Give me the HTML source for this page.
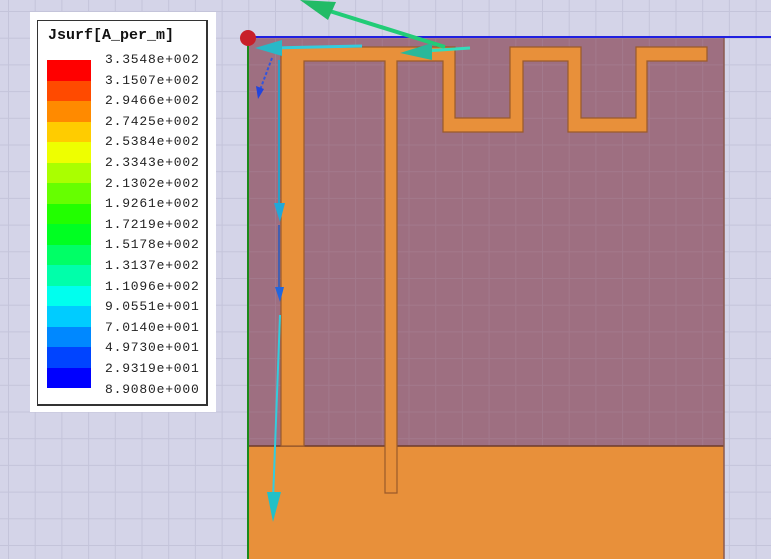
<!DOCTYPE html>
<html><head><meta charset="utf-8"><style>
html,body{margin:0;padding:0;width:771px;height:559px;overflow:hidden;background:#d4d4e8}
.leg{position:absolute;left:30px;top:12px;width:186px;height:400px;background:#fff}
.inner{position:absolute;left:7px;top:8px;width:168px;height:383px;border:1px solid #333;border-bottom-width:2px;border-right-width:2px}
.t{position:absolute;left:10px;top:6px;font:bold 15px "Liberation Mono",monospace;color:#111}
.bar{position:absolute;left:9px;width:44px}
.lab{position:absolute;left:67px;font:13px "Liberation Mono",monospace;color:#222;letter-spacing:0.8px}
</style></head><body>
<svg width="771" height="559" style="position:absolute;left:0;top:0">
<defs>
<pattern id="g" x="8" y="11" width="26.7" height="26.7" patternUnits="userSpaceOnUse">
<path d="M0 0V26.7M0 0H26.7" stroke="#c4c4da" stroke-width="2" fill="none"/>
</pattern>
</defs>
<rect width="771" height="559" fill="url(#g)"/>
<rect x="248" y="38" width="476" height="408" fill="#9e6f81"/>
<rect x="248" y="38" width="476" height="408" fill="url(#g)" opacity="0.12"/>
<rect x="248" y="446" width="476" height="113" fill="#e8903a"/>
<line x1="248" y1="446" x2="724" y2="446" stroke="#6e3a2a" stroke-width="1.5"/>
<line x1="724" y1="38" x2="724" y2="559" stroke="#8a5a50" stroke-width="1.5"/>
<path d="M281 47H455V118H510V47H581V118H636V47H707V61H647V132H568V61H523V132H443V61H397V493H385V61H304V446H281Z" fill="#e8903a" stroke="#9a5a2a" stroke-width="1.2"/>
<line x1="248" y1="37" x2="771" y2="37" stroke="#2020e0" stroke-width="2"/>
<line x1="248" y1="38" x2="248" y2="559" stroke="#1a8a1a" stroke-width="2"/>
<circle cx="248" cy="38" r="8" fill="#c8202a"/>
<line x1="445" y1="47" x2="320" y2="8" stroke="#22cc77" stroke-width="4"/>
<polygon points="300,0 336,2 328,20" fill="#22bb66"/>
<line x1="470" y1="48" x2="410" y2="52" stroke="#33ddbb" stroke-width="3"/>
<polygon points="400,53 432,43 432,60" fill="#2ab89a"/>
<line x1="362" y1="46" x2="270" y2="48" stroke="#33ccdd" stroke-width="3"/>
<polygon points="255,48 282,40 282,56" fill="#28b8c8"/>
<line x1="272" y1="58" x2="260" y2="90" stroke="#3355dd" stroke-width="2" stroke-dasharray="3,2"/>
<polygon points="258,99 256,86 264,89" fill="#2244dd"/>
<line x1="279" y1="60" x2="279" y2="210" stroke="#2aa0c8" stroke-width="2"/>
<polygon points="274,203 285,203 280,222" fill="#22a8d8"/>
<line x1="279" y1="225" x2="279" y2="290" stroke="#4460b0" stroke-width="2"/>
<polygon points="275,287 284,287 280,302" fill="#2266dd"/>
<line x1="280" y1="315" x2="273" y2="500" stroke="#33ccdd" stroke-width="2"/>
<polygon points="267,492 281,492 273,522" fill="#22c0c8"/>
</svg>
<div class="leg"><div class="inner">
<div class="t">Jsurf[A_per_m]</div>
<div class="bar" style="top:39px;height:21px;background:#ff0000"></div>
<div class="bar" style="top:60px;height:20px;background:#ff4a00"></div>
<div class="bar" style="top:80px;height:21px;background:#ff8a00"></div>
<div class="bar" style="top:101px;height:20px;background:#ffcc00"></div>
<div class="bar" style="top:121px;height:21px;background:#eeff00"></div>
<div class="bar" style="top:142px;height:20px;background:#aaff00"></div>
<div class="bar" style="top:162px;height:21px;background:#66ff00"></div>
<div class="bar" style="top:183px;height:20px;background:#22ff00"></div>
<div class="bar" style="top:203px;height:21px;background:#00ff22"></div>
<div class="bar" style="top:224px;height:20px;background:#00ff66"></div>
<div class="bar" style="top:244px;height:21px;background:#00ffaa"></div>
<div class="bar" style="top:265px;height:20px;background:#00ffee"></div>
<div class="bar" style="top:285px;height:21px;background:#00ccff"></div>
<div class="bar" style="top:306px;height:20px;background:#0088ff"></div>
<div class="bar" style="top:326px;height:21px;background:#0044ff"></div>
<div class="bar" style="top:347px;height:20px;background:#0000ff"></div>
<div class="lab" style="top:31px">3.3548e+002</div>
<div class="lab" style="top:51.6px">3.1507e+002</div>
<div class="lab" style="top:72.2px">2.9466e+002</div>
<div class="lab" style="top:92.8px">2.7425e+002</div>
<div class="lab" style="top:113.4px">2.5384e+002</div>
<div class="lab" style="top:134px">2.3343e+002</div>
<div class="lab" style="top:154.6px">2.1302e+002</div>
<div class="lab" style="top:175.2px">1.9261e+002</div>
<div class="lab" style="top:195.8px">1.7219e+002</div>
<div class="lab" style="top:216.4px">1.5178e+002</div>
<div class="lab" style="top:237px">1.3137e+002</div>
<div class="lab" style="top:257.6px">1.1096e+002</div>
<div class="lab" style="top:278.2px">9.0551e+001</div>
<div class="lab" style="top:298.8px">7.0140e+001</div>
<div class="lab" style="top:319.4px">4.9730e+001</div>
<div class="lab" style="top:340px">2.9319e+001</div>
<div class="lab" style="top:360.6px">8.9080e+000</div>
</div></div>
</body></html>
